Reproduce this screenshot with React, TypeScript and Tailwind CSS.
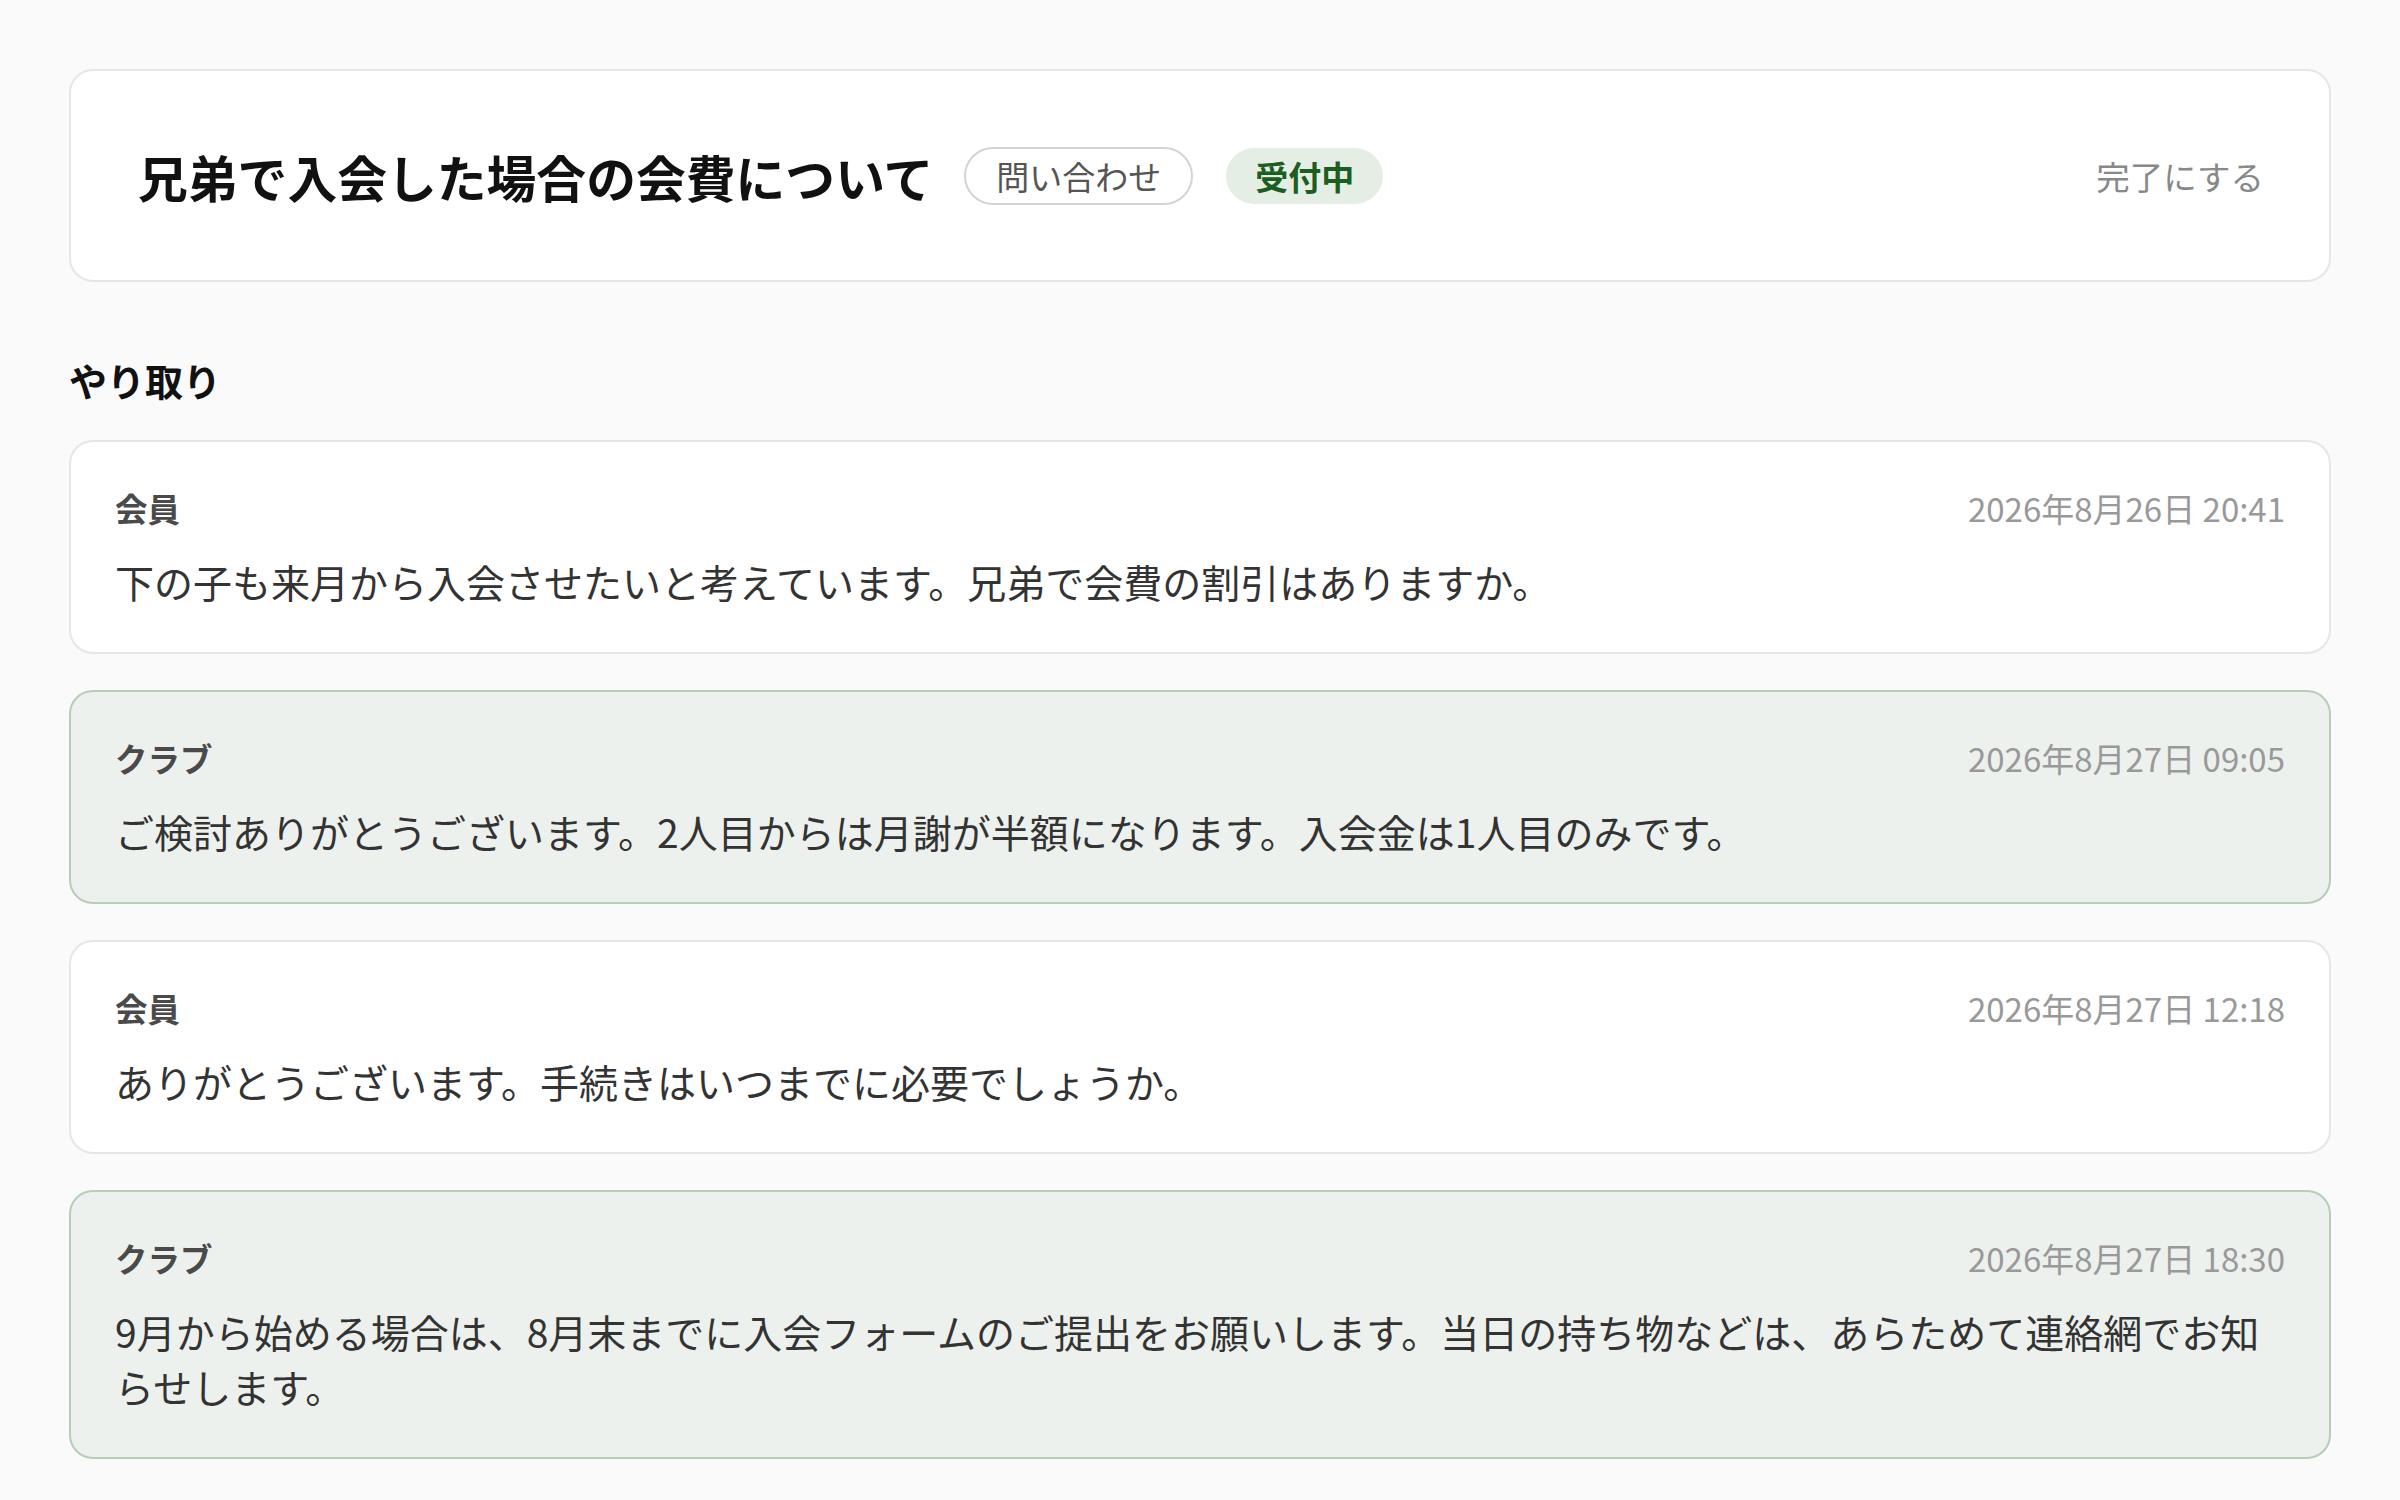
type Message = {
  id: number;
  sender: "member" | "club";
  body: string;
  sentAt: string;
};

const messages: Message[] = [
  {
    id: 1,
    sender: "member",
    body: "下の子も来月から入会させたいと考えています。兄弟で会費の割引はありますか。",
    sentAt: "2026年8月26日 20:41",
  },
  {
    id: 2,
    sender: "club",
    body: "ご検討ありがとうございます。2人目からは月謝が半額になります。入会金は1人目のみです。",
    sentAt: "2026年8月27日 09:05",
  },
  {
    id: 3,
    sender: "member",
    body: "ありがとうございます。手続きはいつまでに必要でしょうか。",
    sentAt: "2026年8月27日 12:18",
  },
  {
    id: 4,
    sender: "club",
    body: "9月から始める場合は、8月末までに入会フォームのご提出をお願いします。当日の持ち物などは、あらためて連絡網でお知らせします。",
    sentAt: "2026年8月27日 18:30",
  },
];

const MessageCard = ({ message }: { message: Message }) => {
  const isClub = message.sender === "club";
  return (
    <div
      className={
        isClub
          ? "rounded-[24px] border-2 border-[#b5cdb9] bg-[#edf1ed] px-[44px] py-[43px]"
          : "rounded-[24px] border-2 border-[#e6e6e6] bg-white px-[44px] py-[43px]"
      }
    >
      <div className="flex items-center justify-between">
        <span className="text-[32.5px] leading-[46px] font-bold text-[#4a4a4a]">
          {isClub ? "クラブ" : "会員"}
        </span>
        <span className="text-[33px] leading-[46px] text-[#999999]">
          {message.sentAt}
        </span>
      </div>
      <p className="mt-[23px] text-[39px] leading-[55px] text-[#333333]">
        {message.body}
      </p>
    </div>
  );
};

export default function App() {
  return (
    <div className="min-h-screen bg-[#fafafa] px-[69px] pt-[69px] pb-[40px] font-['Noto_Sans_CJK_JP','Noto_Sans',sans-serif]">
      <div className="flex h-[213px] items-center justify-between rounded-[24px] border-2 border-[#e6e6e6] bg-white pl-[67px] pr-[65px]">
        <div className="flex items-center">
          <h1 className="mr-[31px] text-[49.8px] leading-[74px] font-bold text-[#111111]">
            兄弟で入会した場合の会費について
          </h1>
          <div className="flex items-center gap-[33px]">
            <span className="rounded-full border-2 border-[#d4d4d4] bg-white px-[30px] py-[3px] text-[33px] leading-[48px] text-[#555555]">
              問い合わせ
            </span>
            <span className="rounded-full bg-[#e4eee5] px-[29px] py-[4px] text-[33px] leading-[48px] font-bold text-[#1b5e20]">
              受付中
            </span>
          </div>
        </div>
        <button className="text-[33.5px] leading-[48px] text-[#888888]">
          完了にする
        </button>
      </div>

      <h2 className="mt-[70px] mb-[32px] text-[38px] leading-[56px] font-bold text-[#111111]">
        やり取り
      </h2>

      <div className="flex flex-col gap-[36px]">
        {messages.map((m) => (
          <MessageCard key={m.id} message={m} />
        ))}
      </div>
    </div>
  );
}
